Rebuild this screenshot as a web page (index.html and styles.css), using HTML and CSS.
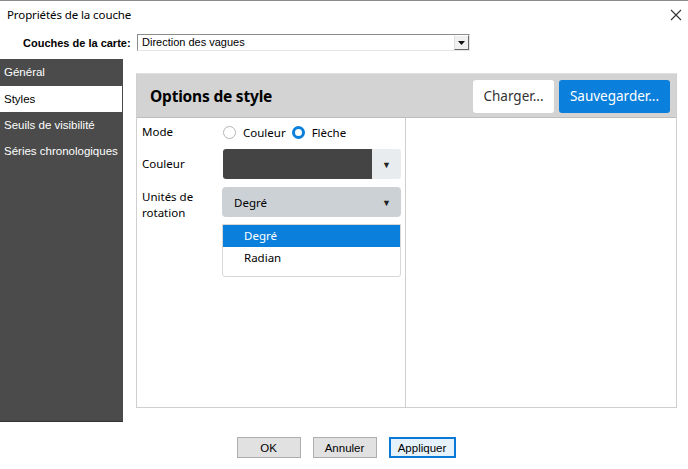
FILE: index.html
```html
<!DOCTYPE html>
<html lang="fr">
<head>
<meta charset="utf-8">
<title>Propriétés de la couche</title>
<link rel="stylesheet" href="styles.css">
</head>
<body>
<div class="dialog">
  <div class="titlebar">
    <span class="title">Propriétés de la couche</span>
    <svg class="close" width="12" height="12" viewBox="0 0 12 12"><path d="M1 1 L11 11 M11 1 L1 11" stroke="#333" stroke-width="1.1" fill="none"/></svg>
  </div>
  <div class="layer-row">
    <span class="layer-label">Couches de la carte:</span>
    <div class="layer-select">
      <span class="layer-value">Direction des vagues</span>
      <span class="layer-btn"><svg width="7" height="4" viewBox="0 0 7 4"><path d="M0 0 H7 L3.5 4 Z" fill="#111"/></svg></span>
    </div>
  </div>
  <div class="content">
    <ul class="sidebar">
      <li class="nav">Général</li>
      <li class="nav active">Styles</li>
      <li class="nav">Seuils de visibilité</li>
      <li class="nav">Séries chronologiques</li>
    </ul>
    <div class="panel">
      <div class="panel-head">
        <span class="panel-title">Options de style</span>
        <div class="head-buttons">
          <button class="btn btn-light">Charger...</button>
          <button class="btn btn-blue">Sauvegarder...</button>
        </div>
      </div>
      <div class="panel-body">
        <div class="col col-left">
          <div class="row row-mode">
            <span class="lbl">Mode</span>
            <div class="radios">
              <span class="radio"></span><span class="rtext">Couleur</span>
              <span class="radio checked"></span><span class="rtext">Flèche</span>
            </div>
          </div>
          <div class="row row-color">
            <span class="lbl">Couleur</span>
            <div class="color-pick">
              <span class="swatch"></span>
              <span class="color-btn">&#9660;</span>
            </div>
          </div>
          <div class="row row-units">
            <span class="lbl">Unités de<br>rotation</span>
            <div class="units">
              <div class="units-select"><span>Degré</span><span class="caret">&#9660;</span></div>
              <ul class="units-list">
                <li class="opt sel">Degré</li>
                <li class="opt">Radian</li>
              </ul>
            </div>
          </div>
        </div>
        <div class="col col-right"></div>
      </div>
    </div>
  </div>
  <div class="footer">
    <button class="wbtn">OK</button>
    <button class="wbtn">Annuler</button>
    <button class="wbtn default">Appliquer</button>
  </div>
</div>
</body>
</html>
```

FILE: styles.css
```css
* { box-sizing: border-box; }
html, body { margin: 0; padding: 0; background: #fff; }
body { width: 688px; height: 469px; overflow: hidden; }
.dialog {
  width: 688px; height: 469px;
  border-top: 1px solid #8a8a8a;
  font-family: "Noto Sans", "Open Sans", sans-serif;
  color: #000;
}
.titlebar {
  height: 27px;
  display: flex; align-items: center; justify-content: space-between;
  padding: 0 6px 0 7px;
}
.title { font-size: 11.5px; letter-spacing: -0.1px; }
.layer-row {
  display: flex; align-items: center;
  margin-top: 6px; height: 17px;
  padding-left: 23px;
}
.layer-label {
  font-family: "Liberation Sans", Arial, sans-serif;
  font-weight: bold; font-size: 11px;
  width: 114px; flex-shrink: 0; white-space: nowrap;
}
.layer-select {
  width: 333px; height: 17px;
  display: flex; align-items: stretch;
  border-top: 1px solid #8c8c8c; border-left: 1px solid #8c8c8c;
  border-right: 1px solid #e6e6e6; border-bottom: 1px solid #e6e6e6;
  background: #fff;
}
.layer-value {
  flex: 1;
  font-family: "Liberation Sans", Arial, sans-serif; font-size: 11px;
  padding-left: 4px; line-height: 15px;
}
.layer-btn {
  width: 15px;
  display: flex; align-items: center; justify-content: center;
  background: #f0f0f0;
  border-left: 1px solid #e0e0e0; border-top: 1px solid #fff;
  border-right: 1px solid #6a6a6a; border-bottom: 1px solid #6a6a6a;
}
.content { display: flex; margin-top: 8px; }
.sidebar {
  list-style: none; margin: 0; padding: 0;
  width: 123px; height: 363px;
  background: #4b4b4b;
  border-bottom: 1px solid #333;
  font-family: "Liberation Sans", Arial, sans-serif;
  font-size: 11.5px;
}
.nav {
  height: 26px; line-height: 26px;
  padding-left: 4px; color: #fff;
}
.nav:first-child { height: 27px; }
.nav.active { background: #fff; color: #000; margin-right: 1px; }
.panel {
  margin-left: 13px; margin-top: 14px;
  width: 541px; height: 335px;
  border: 1px solid #cfcfcf;
  border-top-color: #e0e0e0;
  display: flex; flex-direction: column;
}
.panel-head {
  height: 44px; background: #d3d3d3;
  display: flex; align-items: center; justify-content: space-between;
  padding: 0 6px 0 13px;
  border-bottom: 1px solid #bdbdbd;
}
.panel-title { font-weight: bold; font-size: 15.5px; letter-spacing: -0.2px; }
.head-buttons { display: flex; gap: 5px; margin-top: 1px; }
.btn {
  font-family: "Noto Sans", "Open Sans", sans-serif;
  font-size: 13.5px; height: 33px; border: none; border-radius: 3px;
  padding: 0; cursor: pointer;
}
.btn-light { width: 81px; background: #fff; color: #333; }
.btn-blue { width: 111px; background: #0a7fdc; color: #fff; }
.panel-body { flex: 1; display: flex; }
.col-left { width: 269px; border-right: 1px solid #cfcfcf; padding: 5px 4px 0 5px; }
.col-right { flex: 1; }
.row { display: flex; }
.lbl { width: 81px; font-size: 11.5px; line-height: 16px; }
.row-mode { align-items: center; height: 18px; }
.radios { display: flex; align-items: center; }
.radio {
  width: 13px; height: 13px; border-radius: 50%;
  border: 1px solid #b5b5b5; background: #fff; margin-right: 7px;
}
.radio.checked { border: 3.5px solid #0a7fdc; margin-left: 6px; }
.rtext { font-size: 11.5px; }
.row-color { align-items: center; margin-top: 8px; height: 30px; }
.color-pick { display: flex; width: 178px; height: 30px; }
.swatch { width: 149px; background: #444; border-radius: 3px 0 0 3px; }
.color-btn {
  flex: 1; background: #e9ecef; border-radius: 0 3px 3px 0;
  font-size: 9px; display: flex; align-items: center; justify-content: center; color: #222;
}
.row-units { margin-top: 8px; }
.row-units .lbl { margin-top: 2px; }
.units { width: 179px; margin-left: -1px; }
.units-select {
  height: 30px; background: #ccd1d6; border-radius: 4px;
  display: flex; align-items: center; justify-content: space-between;
  padding: 0 10px 0 12px; font-size: 11.5px;
}
.caret { font-size: 9px; color: #222; }
.units-list {
  list-style: none; margin: 7px 0 0 0; padding: 0 0 7px 0;
  border: 1px solid #d8d8d8; border-radius: 0 0 3px 3px;
}
.opt { height: 22px; line-height: 22px; padding-left: 21px; font-size: 11.5px; }
.opt.sel { background: #0a7fdc; color: #fff; }
.footer {
  display: flex; justify-content: center; gap: 12px;
  margin-top: 15px; padding-left: 4px;
}
.wbtn {
  height: 21px; width: 64px;
  font-family: "Liberation Sans", Arial, sans-serif; font-size: 11.5px;
  background: #e1e1e1; border: 1px solid #adadad; padding: 0; color: #000;
}
.wbtn.default { width: 67px; background: #e5f1fb; border: 2px solid #0a78d7; }
```
